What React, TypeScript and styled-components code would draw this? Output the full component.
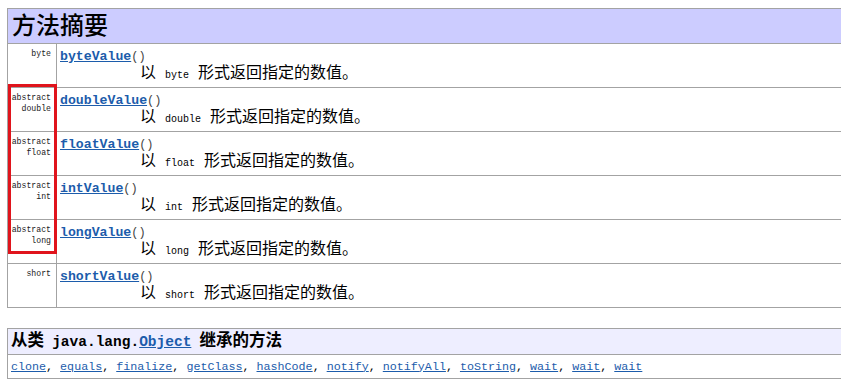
import React from 'react'
import styled, { createGlobalStyle } from 'styled-components'

type MethodRow = {
  modifier?: string
  type: string
  name: string
}

const METHODS: MethodRow[] = [
  { type: 'byte', name: 'byteValue' },
  { modifier: 'abstract', type: 'double', name: 'doubleValue' },
  { modifier: 'abstract', type: 'float', name: 'floatValue' },
  { modifier: 'abstract', type: 'int', name: 'intValue' },
  { modifier: 'abstract', type: 'long', name: 'longValue' },
  { type: 'short', name: 'shortValue' },
]

const INHERITED = [
  'clone',
  'equals',
  'finalize',
  'getClass',
  'hashCode',
  'notify',
  'notifyAll',
  'toString',
  'wait',
  'wait',
  'wait',
]

const MONO = `"Liberation Mono", "DejaVu Sans Mono", monospace`
const CJK = `"Liberation Serif", "Noto Sans CJK SC", sans-serif`

export default function App(): JSX.Element {
  return (
    <>
      <GlobalStyle />
      <Page>
        <TableWrap>
          <SummaryTable>
            <tbody>
              <tr>
                <SummaryHeader colSpan={2}>方法摘要</SummaryHeader>
              </tr>
              {METHODS.map(method => (
                <tr key={method.name}>
                  <TypeCell>
                    {method.modifier && (
                      <>
                        {method.modifier}
                        <br />
                      </>
                    )}
                    {method.type}
                  </TypeCell>
                  <MethodCell>
                    <Signature>
                      <MethodLink href="#">{method.name}</MethodLink>
                      <Parens>()</Parens>
                    </Signature>
                    <Description>
                      以 <Code>{method.type}</Code> 形式返回指定的数值。
                    </Description>
                  </MethodCell>
                </tr>
              ))}
            </tbody>
          </SummaryTable>
          <Highlight />
        </TableWrap>

        <InheritedTable>
          <tbody>
            <tr>
              <InheritedHeader>
                从类 <HeaderCode>java.lang.</HeaderCode>
                <HeaderLink href="#">Object</HeaderLink> 继承的方法
              </InheritedHeader>
            </tr>
            <tr>
              <InheritedCell>
                {INHERITED.map((name, index) => (
                  <React.Fragment key={`${name}-${index}`}>
                    <InheritedLink href="#">{name}</InheritedLink>
                    {index < INHERITED.length - 1 && ', '}
                  </React.Fragment>
                ))}
              </InheritedCell>
            </tr>
          </tbody>
        </InheritedTable>
      </Page>
    </>
  )
}

const GlobalStyle = createGlobalStyle`
  html, body {
    margin: 0;
    background: #ffffff;
    overflow: hidden;
  }
  body {
    padding: 8px 0 0 7px;
    font-family: ${CJK};
    color: #000000;
  }
`

const Page = styled.div`
  display: flex;
  flex-direction: column;
  gap: 20px;
  width: 860px;
`

const TableWrap = styled.div`
  position: relative;
`

const SummaryTable = styled.table`
  width: 100%;
  border-collapse: collapse;
  border: 1px solid #a3a3a3;
`

const SummaryHeader = styled.th`
  background: #ccccff;
  height: 35px;
  box-sizing: border-box;
  padding: 0 4px;
  text-align: left;
  font-size: 24px;
  font-weight: 500;
  line-height: 32px;
  border: 1px solid #a3a3a3;
`

const TypeCell = styled.td`
  width: 49px;
  box-sizing: border-box;
  height: 44px;
  padding: 5px 5px 0 0;
  vertical-align: top;
  text-align: right;
  font-family: ${MONO};
  font-size: 8.2px;
  line-height: 10.7px;
  color: #222222;
  border: 1px solid #a3a3a3;
`

const MethodCell = styled.td`
  height: 44px;
  box-sizing: border-box;
  padding: 4px 3px 0;
  vertical-align: top;
  border: 1px solid #a3a3a3;
`

const Signature = styled.div`
  height: 16px;
  line-height: 16px;
  font-family: ${MONO};
  white-space: nowrap;
`

const MethodLink = styled.a`
  font-size: 13.2px;
  font-weight: 700;
  color: #1c5cab;
  text-decoration: underline;
`

const Parens = styled.span`
  font-size: 12px;
  color: #444444;
`

const Description = styled.div`
  height: 18px;
  padding-left: 80px;
  font-size: 16px;
  line-height: 18px;
  word-spacing: 5px;
  white-space: nowrap;
`

const Code = styled.code`
  font-family: ${MONO};
  font-size: 10px;
  line-height: 1;
  word-spacing: 0;
`

const Highlight = styled.div`
  position: absolute;
  left: 1px;
  top: 76px;
  width: 49px;
  height: 170px;
  box-sizing: border-box;
  border: 3px solid #e0141c;
  pointer-events: none;
`

const InheritedTable = styled.table`
  width: 100%;
  border-collapse: collapse;
  border: 1px solid #a3a3a3;
`

const InheritedHeader = styled.th`
  background: #eeeeff;
  height: 26px;
  box-sizing: border-box;
  padding: 0 3px;
  text-align: left;
  font-size: 16.5px;
  font-weight: 700;
  line-height: 24px;
  word-spacing: 4px;
  border: 1px solid #a3a3a3;
`

const HeaderCode = styled.code`
  font-family: ${MONO};
  font-size: 14.5px;
  word-spacing: 0;
`

const HeaderLink = styled.a`
  font-family: ${MONO};
  font-size: 14.5px;
  color: #1c5cab;
  text-decoration: underline;
`

const InheritedCell = styled.td`
  height: 24px;
  box-sizing: border-box;
  padding: 0 3px;
  font-family: ${MONO};
  font-size: 11.7px;
  line-height: 22px;
  border: 1px solid #a3a3a3;
`

const InheritedLink = styled.a`
  color: #1c5cab;
  text-decoration: underline;
`
